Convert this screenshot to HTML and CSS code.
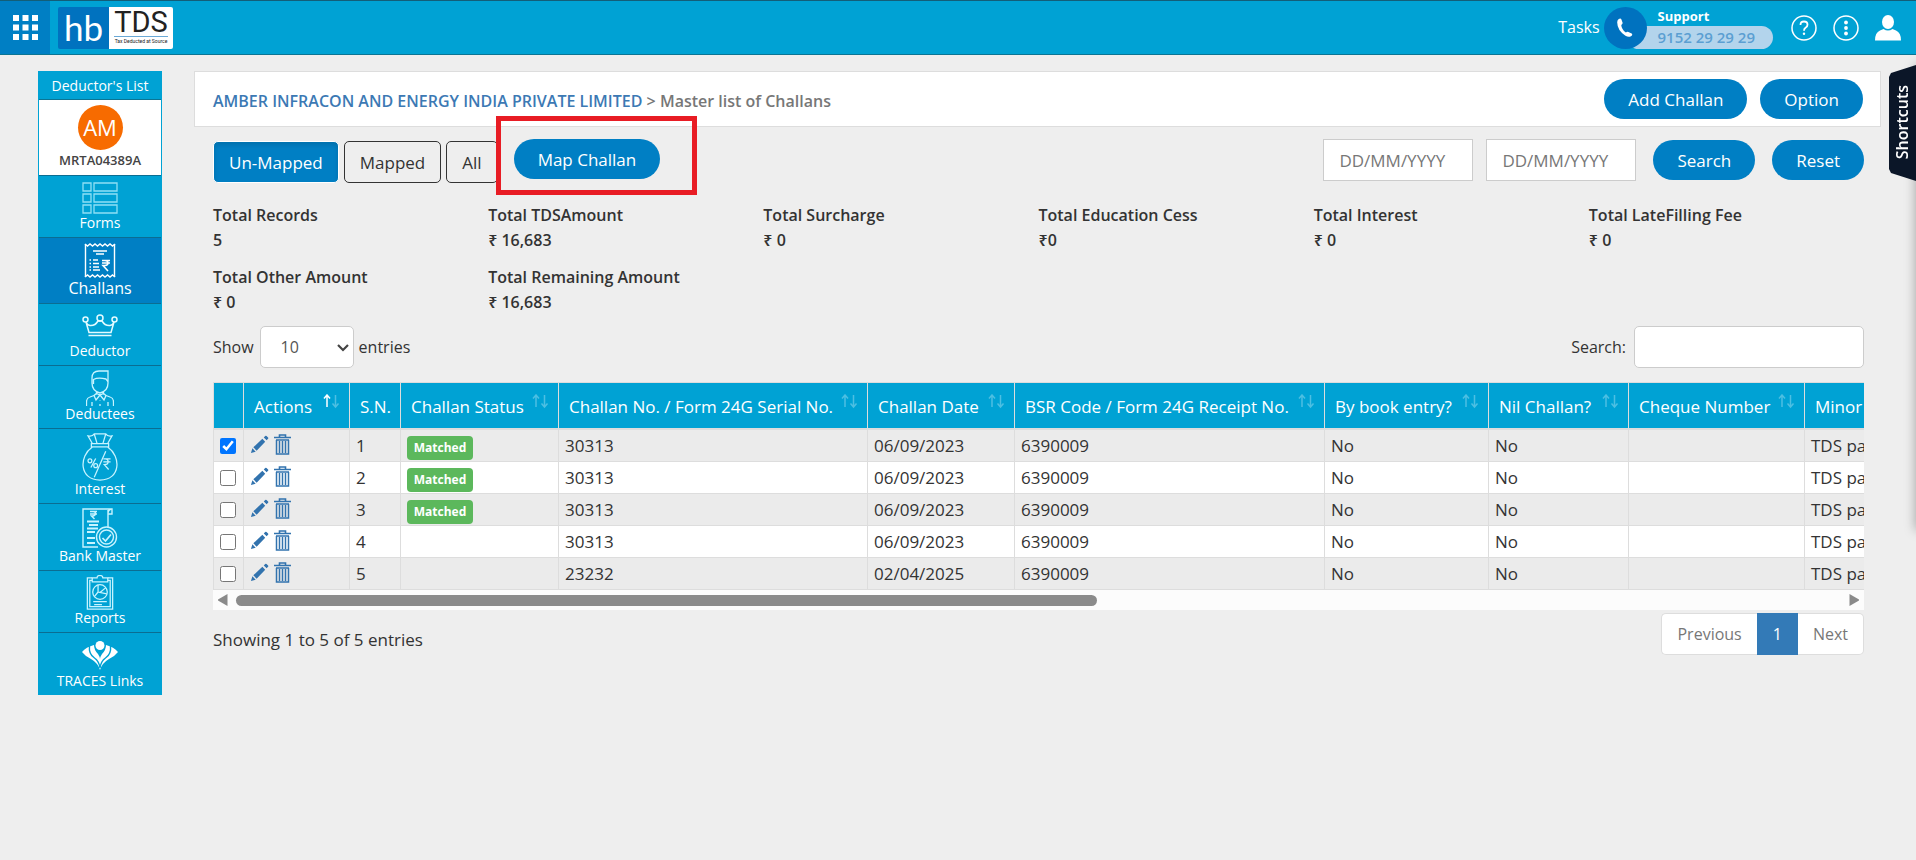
FILE: index.html
```html
<!DOCTYPE html>
<html lang="en">
<head>
  <meta charset="UTF-8">
  <title>Master list of Challans</title>
  <link rel="stylesheet" href="styles.css">
</head>
<body>

  <!-- shared icons -->
  <svg class="sprite" aria-hidden="true">
    <symbol id="i-sort" viewBox="0 0 17 15">
      <path class="up" d="M4 13V1M1 4.500l3-3.500 3 3.500" />
      <path class="down" d="M12.500 1v12M9.500 9.500l3 3.500 3-3.500" />
    </symbol>
    <symbol id="i-edit" viewBox="0 0 20 20">
      <path d="M1 19l1.500-5 3.500 3.500zM3.500 13L13 4l3 3-9 9.500zM14.500 2.500l1.500-1.500q.7-.6 1.400 0L19 2.600q.6.700 0 1.400L17.500 5.500z" />
    </symbol>
    <symbol id="i-trash" viewBox="0 0 17 21">
      <path d="M5.500 3V1h6v2M0 3.500h17M2 6h13" fill="none" stroke="currentColor" stroke-width="1.600" />
      <path d="M2.500 6v14h12V6M5.500 7v12M8.500 7v12M11.500 7v12" fill="none" stroke="currentColor" stroke-width="1.500" />
    </symbol>
  </svg>

  <header class="topbar">
    <button class="apps" aria-label="Apps">
      <svg width="25" height="25" viewBox="0 0 25 25" fill="#fff">
        <path d="M0 0h6v6H0zM9.500 0h6v6h-6zM19 0h6v6h-6zM0 9.500h6v6H0zM9.500 9.500h6v6h-6zM19 9.500h6v6h-6zM0 19h6v6H0zM9.500 19h6v6h-6zM19 19h6v6h-6z" />
      </svg>
    </button>
    <a class="logo" href="#">
      <span class="logo-hb">hb</span>
      <span class="logo-tds"><b>TDS</b><small>Tax Deducted at Source</small></span>
    </a>
    <div class="top-right">
      <a class="tasks" href="#">Tasks</a>
      <div class="support">
        <span class="phone">
          <svg width="16" height="20" viewBox="0 0 18 22" fill="#fff">
            <path d="M2 1q2-1.500 3 .5l1.300 3.500q.2 1.300-1.500 2.500.3 5 5.200 8.500 1.500-1.300 2.800-.6l3.700 1.900q1.600 1.500-.8 3-2.800 1.600-6.200-.6Q.3 13.500.2 4.500.3 2 2 1z" />
          </svg>
        </span>
        <div class="support-text">
          <strong>Support</strong>
          <span class="support-no">9152 29 29 29</span>
        </div>
      </div>
      <button class="top-icon" aria-label="Help">
        <svg width="26" height="26" viewBox="0 0 26 26" fill="none" stroke="#fff" stroke-width="1.500">
          <circle cx="13" cy="13" r="12" />
          <path d="M9.500 10q0-3.500 3.500-3.500t3.500 3.300q0 1.700-2 3-1.500 1-1.500 3" stroke-width="1.800" />
          <circle cx="13" cy="18.800" r="1.200" fill="#fff" stroke="none" />
        </svg>
      </button>
      <button class="top-icon" aria-label="More">
        <svg width="26" height="26" viewBox="0 0 26 26" fill="#fff">
          <circle cx="13" cy="13" r="12" fill="none" stroke="#fff" stroke-width="1.500" />
          <circle cx="13" cy="7.500" r="1.900" /><circle cx="13" cy="13" r="1.900" /><circle cx="13" cy="18.500" r="1.900" />
        </svg>
      </button>
      <button class="top-icon" aria-label="Profile">
        <svg width="26" height="26" viewBox="0 0 26 26" fill="#fff">
          <ellipse cx="13" cy="7" rx="6" ry="7" />
          <path d="M0 25.500q0-8 5-10l3.500-1.500q4.500 3 9 0l3.500 1.500q5 2 5 10z" />
        </svg>
      </button>
    </div>
  </header>

  <div class="page">
    <nav class="sidebar">
      <a class="side-title" href="#">Deductor's List</a>
      <a class="client" href="#">
        <span class="avatar">AM</span>
        <span class="client-tan">MRTA04389A</span>
      </a>
      <a class="side-item" href="#">
        <svg width="36" height="35" viewBox="0 -2 36 35" fill="none" stroke="#8fe0f5" stroke-width="1.300">
          <path d="M1 1h8v8H1zM12 1h23v8H12zM1 12h8v8H1zM12 12h23v8H12zM1 23h8v8H1zM12 23h23v8H12z" />
        </svg>
        Forms
      </a>
      <a class="side-item active" href="#">
        <svg width="32" height="35" viewBox="0 0 32 35" fill="none" stroke="#fff" stroke-width="1.400">
          <path d="M1.500 1v33M30.500 1v33" />
          <path d="M1 1l2.500 2L6 1l2.500 2L11 1l2.500 2L16 1l2.500 2L21 1l2.500 2L26 1l2.500 2L31 1M1 34l2.500-2L6 34l2.500-2 2.500 2 2.500-2 2.500 2 2.500-2 2.500 2 2.500-2 2.500 2 2.500-2 2.500 2" />
          <path d="M9 8h14M12 11h8M9 17h5M9 20.500h6M9 24h6M9 27h7M5.500 17h1.500M5.500 20.500h1.500M5.500 24h1.500M5.500 27h1.500" />
          <path d="M18 17.500h8M18 20h8M18 17.500h3q3 .2 3 2.500t-3 2.500h-2l5 5.500" stroke-width="1.600" />
        </svg>
        Challans
      </a>
      <a class="side-item" href="#">
        <svg width="36" height="35" viewBox="0 4 36 35" fill="none" stroke="#e4fbff" stroke-width="1.500">
          <circle cx="3.500" cy="15.500" r="2.500" /><circle cx="18" cy="14" r="3" /><circle cx="32.500" cy="15.500" r="2.500" />
          <path d="M4 18l3 10.500h22L32 18q-1 3-4 3.500-5 .5-8-4.500h-4q-3 5-8 4.500Q5 21 4 18zM6.500 31.500h23" />
        </svg>
        Deductor
      </a>
      <a class="side-item" href="#">
        <svg width="28" height="36" viewBox="0 0 28 36" fill="none" stroke="#c8f4ff" stroke-width="1.300">
          <path d="M6 8Q6 1 13 1h9v12q0 8-8 10-8-2-8-10zM7.500 14V9.500Q12 7 20 9l2 3M10.500 21.500v3M17.500 21.500v3" />
          <path d="M14 25l-4 5-2-4.500 2.500-2L14 25l3.500-1.500 2.500 2-2 4.500zM8 25.500l-4 1.500q-3.500 1-3.500 5v4M20 25.500l4 1.500q3.500 1 3.500 5v4M6 32v4M22 32v4M14 30v.500M14 34v2" />
        </svg>
        Deductees
      </a>
      <a class="side-item" href="#">
        <svg width="36" height="48" viewBox="0 0 36 50" fill="none" stroke="#c8f4ff" stroke-width="1.300">
          <path d="M10 11L5.500 3Q10 4 12 1h12q2 3 6.500 2L26 11M12 1l3 10M24 1l-3 10M9 11h18v3.500H9zM10 14.500C-4 24-4 49 18 49S40 24 26 14.500" />
          <path d="M24 19L12 46" />
          <path d="M13.500 26.500L8.500 36" /><circle cx="7.500" cy="29" r="2" /><circle cx="13.500" cy="34" r="2" />
          <path d="M21.500 27H29M21.500 30H29M21.500 27h2q3 0 3 3t-4 3l4.500 5" />
        </svg>
        Interest
      </a>
      <a class="side-item" href="#">
        <svg width="36" height="40" viewBox="0 0 36 40" fill="none" stroke="#c8f4ff" stroke-width="1.400">
          <path d="M16 39H1V1h29v5h-4V2v17M29 1q-3 1-3 4" />
          <path d="M8 3.500h7M8 6h7M9 3.500h2q2.500 0 2.500 2T11 8H9.500l3 3" />
          <path d="M5 13.500h12M7 17h9M5 20.500h11M5 24h8M5 30h8M5 35h8" stroke-width="2.200" />
          <circle cx="24.500" cy="29" r="10" /><circle cx="24.500" cy="29" r="7" />
          <path d="M20.500 30l3 3 5.500-6.500" stroke-width="1.700" />
        </svg>
        Bank Master
      </a>
      <a class="side-item" href="#">
        <svg width="28" height="35" viewBox="0 0 28 36" fill="none" stroke="#c8f4ff" stroke-width="1.300">
          <path d="M6 3H1v32h26V3h-5M6 5.500H3.500v27h21v-27H22" />
          <path d="M6 7V3h5q0-2.500 3-2.500T17 3h5v4z" />
          <circle cx="14" cy="17.500" r="7.500" /><path d="M12 10v7.500l9 2M12 17.500L8 22.500M14 18l6-5M7 27.500h14M8 30.500h8" />
        </svg>
        Reports
      </a>
      <a class="side-item" href="#">
        <svg width="36" height="36" viewBox="0 0 36 36" fill="#fff">
          <circle cx="18" cy="8.500" r="4.500" />
          <path d="M0 15Q4 10 12 8q0 5 4 9 2 3 2 5 0-2 2-5 4-4 4-9 8 2 12 7-3 4-9 7-7 4-9 11-2-7-9-11-6-3-9-7z" />
          <path d="M7.500 9q-1 8 5 12 4.500 3 5.500 10M28.500 9q1 8-5 12-4.500 3-5.500 10" fill="none" stroke="#00a2d4" stroke-width="1.400" />
        </svg>
        TRACES Links
      </a>
    </nav>

    <main class="main">
      <section class="panel-head">
        <h1 class="crumbs"><a href="#">AMBER INFRACON AND ENERGY INDIA PRIVATE LIMITED</a> &gt; Master list of Challans</h1>
        <div class="head-actions">
          <button class="pill">Add Challan</button>
          <button class="pill">Option</button>
        </div>
      </section>

      <div class="content">
        <div class="filters">
          <div class="tabs">
            <button class="tab selected">Un-Mapped</button>
            <button class="tab">Mapped</button>
            <button class="tab">All</button>
          </div>
          <div class="map-wrap">
            <button class="pill">Map Challan</button>
            <span class="highlight"></span>
          </div>
          <form class="dates">
            <input type="text" class="date" placeholder="DD/MM/YYYY" aria-label="From date">
            <input type="text" class="date" placeholder="DD/MM/YYYY" aria-label="To date">
            <button type="button" class="pill">Search</button>
            <button type="reset" class="pill">Reset</button>
          </form>
        </div>

        <dl class="totals">
          <div><dt>Total Records</dt><dd>5</dd></div>
          <div><dt>Total TDSAmount</dt><dd>₹ 16,683</dd></div>
          <div><dt>Total Surcharge</dt><dd>₹ 0</dd></div>
          <div><dt>Total Education Cess</dt><dd>₹0</dd></div>
          <div><dt>Total Interest</dt><dd>₹ 0</dd></div>
          <div><dt>Total LateFilling Fee</dt><dd>₹ 0</dd></div>
          <div><dt>Total Other Amount</dt><dd>₹ 0</dd></div>
          <div><dt>Total Remaining Amount</dt><dd>₹ 16,683</dd></div>
        </dl>

        <div class="table-tools">
          <label class="length">Show
            <span class="select-box">
              <select>
                <option>10</option>
              </select>
              <svg width="12" height="8" viewBox="0 0 12 8" fill="none" stroke="#444" stroke-width="2.200"><path d="M1 1l5 5 5-5" /></svg>
            </span>
            entries
          </label>
          <label class="find">Search: <input type="text"></label>
        </div>

        <div class="table-scroll">
          <table class="challans">
            <colgroup>
              <col class="c-check"><col class="c-actions"><col class="c-sn"><col class="c-status"><col class="c-no"><col class="c-date"><col class="c-bsr"><col class="c-book"><col class="c-nil"><col class="c-cheque"><col class="c-minor">
            </colgroup>
            <thead>
              <tr>
                <th></th>
                <th><div>Actions <svg class="sort asc"><use href="#i-sort" /></svg></div></th>
                <th><div>S.N.</div></th>
                <th><div>Challan Status <svg class="sort"><use href="#i-sort" /></svg></div></th>
                <th><div>Challan No. / Form 24G Serial No. <svg class="sort"><use href="#i-sort" /></svg></div></th>
                <th><div>Challan Date <svg class="sort"><use href="#i-sort" /></svg></div></th>
                <th><div>BSR Code / Form 24G Receipt No. <svg class="sort"><use href="#i-sort" /></svg></div></th>
                <th><div>By book entry? <svg class="sort"><use href="#i-sort" /></svg></div></th>
                <th><div>Nil Challan? <svg class="sort"><use href="#i-sort" /></svg></div></th>
                <th><div>Cheque Number <svg class="sort"><use href="#i-sort" /></svg></div></th>
                <th><div>Minor Head</div></th>
              </tr>
            </thead>
            <tbody>
              <tr>
                <td><input type="checkbox" aria-label="Select row 1" checked></td>
                <td class="actions"><a href="#" aria-label="Edit"><svg class="edit"><use href="#i-edit" /></svg></a><a href="#" aria-label="Delete"><svg class="trash"><use href="#i-trash" /></svg></a></td>
                <td>1</td><td><span class="badge">Matched</span></td><td>30313</td><td>06/09/2023</td><td>6390009</td><td>No</td><td>No</td><td></td><td>TDS payable</td>
              </tr>
              <tr>
                <td><input type="checkbox" aria-label="Select row 2"></td>
                <td class="actions"><a href="#" aria-label="Edit"><svg class="edit"><use href="#i-edit" /></svg></a><a href="#" aria-label="Delete"><svg class="trash"><use href="#i-trash" /></svg></a></td>
                <td>2</td><td><span class="badge">Matched</span></td><td>30313</td><td>06/09/2023</td><td>6390009</td><td>No</td><td>No</td><td></td><td>TDS payable</td>
              </tr>
              <tr>
                <td><input type="checkbox" aria-label="Select row 3"></td>
                <td class="actions"><a href="#" aria-label="Edit"><svg class="edit"><use href="#i-edit" /></svg></a><a href="#" aria-label="Delete"><svg class="trash"><use href="#i-trash" /></svg></a></td>
                <td>3</td><td><span class="badge">Matched</span></td><td>30313</td><td>06/09/2023</td><td>6390009</td><td>No</td><td>No</td><td></td><td>TDS payable</td>
              </tr>
              <tr>
                <td><input type="checkbox" aria-label="Select row 4"></td>
                <td class="actions"><a href="#" aria-label="Edit"><svg class="edit"><use href="#i-edit" /></svg></a><a href="#" aria-label="Delete"><svg class="trash"><use href="#i-trash" /></svg></a></td>
                <td>4</td><td></td><td>30313</td><td>06/09/2023</td><td>6390009</td><td>No</td><td>No</td><td></td><td>TDS payable</td>
              </tr>
              <tr>
                <td><input type="checkbox" aria-label="Select row 5"></td>
                <td class="actions"><a href="#" aria-label="Edit"><svg class="edit"><use href="#i-edit" /></svg></a><a href="#" aria-label="Delete"><svg class="trash"><use href="#i-trash" /></svg></a></td>
                <td>5</td><td></td><td>23232</td><td>02/04/2025</td><td>6390009</td><td>No</td><td>No</td><td></td><td>TDS payable</td>
              </tr>
            </tbody>
          </table>
        </div>
        <div class="scrollbar">
          <svg width="10" height="12" viewBox="0 0 10 12" fill="#8a8a8a"><path d="M9.500 0v12L0 6.500v-1z" /></svg>
          <div class="track"><div class="thumb"></div></div>
          <svg width="10" height="12" viewBox="0 0 10 12" fill="#8a8a8a"><path d="M.5 0v12L10 6.500v-1z" /></svg>
        </div>

        <div class="table-foot">
          <span class="info">Showing 1 to 5 of 5 entries</span>
          <div class="pager">
            <a href="#">Previous</a>
            <a href="#" class="current">1</a>
            <a href="#">Next</a>
          </div>
        </div>
      </div>
    </main>
  </div>

  <div class="drawer-edge"></div>
  <button class="shortcuts"><span>Shortcuts</span></button>

</body>
</html>
```
FILE: styles.css
```css
* {
  box-sizing: border-box;
}

body {
  margin: 0;
  min-height: 100vh;
  background: #eee;
  color: #333;
  font-family: "Open Sans", "Noto Sans", sans-serif;
  font-size: 17px;
  line-height: 25px;
  overflow-x: hidden;
}

a {
  text-decoration: none;
}

button,
input,
select {
  font: inherit;
}

button {
  cursor: pointer;
}

.sprite {
  display: none;
}

/* top bar */
.topbar {
  display: flex;
  align-items: center;
  height: 55px;
  background: #00a2d4;
  border-top: 1px solid #135e78;
  border-bottom: 1px solid #0b7594;
}

.apps {
  display: flex;
  align-items: center;
  justify-content: center;
  align-self: stretch;
  width: 50px;
  padding: 0;
  border: 0;
  background: #007fc4;
}

.logo {
  display: flex;
  height: 42px;
  margin-left: 8px;
}

.logo-hb {
  width: 51px;
  border-radius: 2px 0 0 2px;
  background: #0072bf;
  color: #fff;
  font-family: Lato, sans-serif;
  font-size: 35px;
  line-height: 40px;
  text-align: center;
}

.logo-tds {
  display: flex;
  flex-direction: column;
  align-items: center;
  width: 64px;
  padding-top: 2px;
  border-radius: 0 2px 2px 0;
  background: #fff;
  color: #222;
}

.logo-tds b {
  border-bottom: 1px solid #6aa9d6;
  font-family: Roboto, sans-serif;
  font-size: 29px;
  font-weight: 400;
  line-height: 27px;
}

.logo-tds small {
  font-family: Roboto, sans-serif;
  font-size: 5px;
  line-height: 8px;
}

.top-right {
  display: flex;
  align-items: center;
  margin-left: auto;
  padding-right: 15px;
}

.tasks {
  color: #fff;
  font-size: 16px;
}

.support {
  display: flex;
  align-items: flex-end;
  margin: 0 18px 0 4px;
}

.phone {
  display: flex;
  align-items: center;
  justify-content: center;
  z-index: 1;
  width: 43px;
  height: 42px;
  border-radius: 50%;
  background: #0072bf;
}

.support-text {
  display: flex;
  flex-direction: column;
  margin-left: -20px;
}

.support-text strong {
  padding-left: 31px;
  color: #fff;
  font-size: 13px;
  line-height: 19px;
}

.support-no {
  padding: 0 18px 0 31px;
  border-radius: 12px;
  background: #b3d4ec;
  color: #5b9fd2;
  font-size: 15px;
  font-weight: 600;
  line-height: 23px;
}

.top-icon {
  display: flex;
  margin-left: 16px;
  padding: 0;
  border: 0;
  background: none;
}

.support + .top-icon {
  margin-left: 0;
}

/* page frame */
.page {
  display: flex;
  align-items: flex-start;
  gap: 32px;
  padding: 16px 35px 16px 38px;
}

.sidebar {
  flex: none;
  width: 124px;
  padding: 0 1px;
  background: #00a2d4;
  text-align: center;
  font-size: 14px;
}

.sidebar a {
  display: flex;
  flex-direction: column;
  align-items: center;
  color: #fff;
}

.sidebar .side-title {
  height: 29px;
  justify-content: center;
  border-bottom: 1px solid #0b7594;
}

.sidebar .client {
  padding: 5px 0 4px;
  background: #fff;
  color: #444;
}

.avatar {
  width: 45px;
  height: 45px;
  border-radius: 50%;
  background: #f76b00;
  color: #fff;
  font-size: 22px;
  line-height: 45px;
}

.client-tan {
  font-size: 13px;
  font-weight: 600;
  line-height: 21px;
}

.side-item {
  padding: 4px 0 6px;
  border-top: 1px solid #0b6d92;
  line-height: 16px;
}

.side-item.active {
  padding: 5px 0;
  background: #007fc4;
  font-size: 16px;
  line-height: 20px;
}

/* main column */
.main {
  flex: 1;
  min-width: 0;
}

.panel-head {
  display: flex;
  align-items: center;
  justify-content: space-between;
  height: 56px;
  padding: 0 17px 0 18px;
  border: 1px solid #ddd;
  background: #fff;
}

.crumbs {
  margin: 0;
  padding-top: 4px;
  color: #777;
  font-size: 16px;
  font-weight: 600;
}

.crumbs a {
  color: #3c79b4;
}

.head-actions {
  display: flex;
  gap: 13px;
}

.pill {
  height: 40px;
  padding: 0 24px;
  border: 0;
  border-radius: 20px;
  background: #007fc4;
  color: #fff;
}

.content {
  padding: 12px 17px 0 19px;
}

.filters {
  display: flex;
  align-items: flex-start;
}

.tabs {
  display: flex;
  gap: 5px;
  padding-top: 2px;
}

.tab {
  height: 42px;
  padding: 0 15px;
  border: 1px solid #333;
  border-radius: 5px;
  background: #eee;
  color: #333;
}

.tab.selected {
  border-color: #fff;
  background: #007fc4;
  color: #fff;
  box-shadow: inset 0 3px 5px rgba(0, 0, 0, 0.125);
}

.map-wrap {
  position: relative;
  margin-left: 16px;
}

/* callout frame over the Map Challan button */
.highlight {
  position: absolute;
  inset: -23px -37px -16px -18px;
  border: 5px solid #e81c24;
  pointer-events: none;
}

.map-wrap .pill {
  display: block;
}

.dates {
  display: flex;
  align-items: center;
  gap: 17px;
  margin-left: auto;
}

.date {
  width: 150px;
  height: 42px;
  padding: 0 15px;
  border: 1px solid #ccc;
  background: #fff;
}

.date + .date {
  margin-left: -4px;
}

.date::placeholder {
  color: #777;
}

.totals {
  display: grid;
  grid-template-columns: repeat(6, 1fr);
  row-gap: 12px;
  margin: 20px 0 11px;
  font-size: 16px;
  font-weight: 600;
}

.totals dd {
  margin: 0;
}

.table-tools {
  display: flex;
  justify-content: space-between;
  font-size: 16px;
}

.length,
.find {
  display: flex;
  align-items: center;
}

.select-box {
  position: relative;
  margin: 0 5px 0 6px;
}

.select-box select {
  display: block;
  width: 94px;
  height: 42px;
  padding: 0 20px;
  border: 1px solid #ccc;
  border-radius: 5px;
  background: #fff;
  color: #555;
  appearance: none;
}

.select-box svg {
  position: absolute;
  top: 18px;
  right: 5px;
  pointer-events: none;
}

.find input {
  width: 230px;
  height: 42px;
  margin-left: 8px;
  border: 1px solid #ccc;
  border-radius: 5px;
  background: #fff;
}

/* challan table */
.table-scroll {
  margin-top: 14px;
  overflow: hidden;
  border-left: 1px solid #ddd;
}

.challans {
  width: 3079px;
  table-layout: fixed;
  border-top: 1px solid #ddd;
  border-spacing: 0;
}

.c-check { width: 30px; }
.c-actions { width: 106px; }
.c-sn { width: 51px; }
.c-status { width: 158px; }
.c-no { width: 309px; }
.c-date { width: 147px; }
.c-bsr { width: 310px; }
.c-book { width: 164px; }
.c-nil { width: 140px; }
.c-cheque { width: 176px; }

.challans th {
  height: 47px;
  padding: 2px 9px 0 10px;
  border-right: 1px solid #ddd;
  border-bottom: 2px solid #ddd;
  background: #00a2d4;
  color: #fff;
  font-weight: 400;
  text-align: left;
  white-space: nowrap;
}

.challans th div {
  display: flex;
  justify-content: space-between;
}

.challans td {
  height: 32px;
  padding: 0 6px;
  border-right: 1px solid #ddd;
  border-bottom: 1px solid #ddd;
  background: #fff;
  line-height: 24px;
  white-space: nowrap;
}

.challans tbody tr:nth-child(odd) td {
  background: #ebebeb;
}

.challans input {
  display: block;
  width: 16px;
  height: 16px;
  margin: 0;
}

.sort {
  --up: #4dbfe2;
  width: 17px;
  height: 15px;
  fill: none;
  stroke: #4dbfe2;
  stroke-width: 1.5px;
}

.sort.asc {
  --up: #fff;
}

.up {
  stroke: var(--up);
}

.challans .actions {
  padding-bottom: 3px;
  line-height: 0;
}

.actions a {
  display: inline-block;
  vertical-align: middle;
  color: #3273ae;
}

.actions svg {
  display: block;
  fill: currentColor;
}

.edit {
  width: 19px;
  height: 19px;
  margin-right: 5px;
}

.trash {
  width: 17px;
  height: 21px;
}

.badge {
  display: block;
  width: 66px;
  margin-top: 4px;
  border-radius: 4px;
  background: #5cb85c;
  color: #fff;
  font-size: 12px;
  font-weight: 700;
  text-align: center;
}

.scrollbar {
  display: flex;
  align-items: center;
  gap: 8px;
  height: 20px;
  padding: 0 5px;
  background: #fcfcfc;
}

.track {
  flex: 1;
  padding-right: 10px;
}

.thumb {
  width: 54%;
  height: 11px;
  border-radius: 6px;
  background: #8b8b8b;
}

.table-foot {
  display: flex;
  align-items: center;
  justify-content: space-between;
  margin-top: 3px;
}

.info {
  padding-top: 10px;
}

.pager {
  display: flex;
}

.pager a {
  height: 42px;
  padding: 0 15px;
  border: 1px solid #ddd;
  background: #fff;
  color: #777;
  font-size: 16px;
  line-height: 40px;
}

.pager a:first-child {
  border-right: 0;
  border-radius: 5px 0 0 5px;
}

.pager a:last-child {
  border-left: 0;
  border-radius: 0 5px 5px 0;
}

.pager .current {
  border-color: #337ab7;
  background: #337ab7;
  color: #fff;
}

/* side drawer */
.drawer-edge {
  position: fixed;
  top: 65px;
  right: -10px;
  width: 10px;
  height: 465px;
  box-shadow: 0 0 12px rgba(0, 0, 0, 0.35);
}

.shortcuts {
  position: fixed;
  top: 65px;
  right: 0;
  width: 27px;
  height: 116px;
  padding: 6px 0 0;
  border: 0;
  background: #0b1628;
  clip-path: polygon(0 12px, 2px 8px, 100% 0, 100% 100%, 2px 108px, 0 104px);
  color: #fff;
  font-size: 16px;
  font-weight: 600;
}

.shortcuts span {
  writing-mode: vertical-rl;
  transform: rotate(180deg);
}
```
